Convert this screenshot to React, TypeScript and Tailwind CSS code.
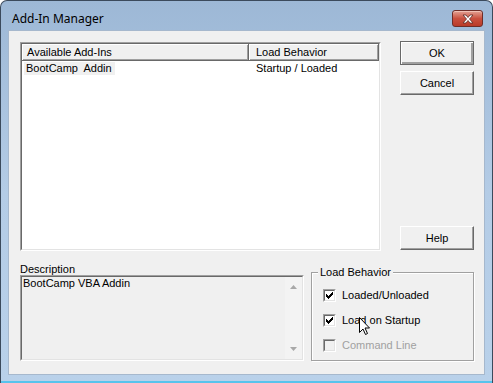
const sunken =
  'border border-t-[#a0a0a0] border-l-[#a0a0a0] border-r-white border-b-white';
const sunkenInner =
  'border border-t-[#696969] border-l-[#696969] border-r-[#e3e3e3] border-b-[#e3e3e3]';

const checkPixels = [
  [6, 0, 1], [5, 1, 2], [0, 2, 1], [4, 2, 3], [0, 3, 2], [3, 3, 3], [0, 4, 5], [1, 5, 3], [2, 6, 1],
];

function Button({ label, isDefault = false, className = '' }: { label: string; isDefault?: boolean; className?: string }) {
  return (
    <div
      className={`${className} w-[74px] flex items-center justify-center bg-[#f0f0f0] ${
        isDefault
          ? 'border border-[#696969] shadow-[inset_1px_1px_#fff,inset_-1px_-1px_#a0a0a0,inset_-2px_-2px_#a0a0a0]'
          : 'border border-t-white border-l-white border-r-[#696969] border-b-[#696969] shadow-[inset_-1px_-1px_#a0a0a0]'
      }`}
    >
      {label}
    </div>
  );
}

function Check({ label, checked, disabled = false }: { label: string; checked: boolean; disabled?: boolean }) {
  return (
    <div className={`flex items-center h-[13px] ${disabled ? 'text-[#a0a0a0]' : 'text-black'}`}>
      <div
        className={`w-[13px] h-[13px] border border-t-[#a0a0a0] border-l-[#a0a0a0] border-r-white border-b-white ${
          disabled ? 'bg-[#f0f0f0]' : 'bg-white'
        }`}
      >
        <div className="w-full h-full border border-t-[#696969] border-l-[#696969] border-r-[#e3e3e3] border-b-[#e3e3e3] flex items-center justify-center">
          {checked && (
            <svg width="7" height="7" viewBox="0 0 7 7" shapeRendering="crispEdges">
              {checkPixels.map(([x, y, w]) => (
                <rect key={`${x}-${y}`} x={x} y={y} width={w} height={1} fill="#000" />
              ))}
            </svg>
          )}
        </div>
      </div>
      <span className="ml-[6px]">{label}</span>
    </div>
  );
}

export default function App() {
  return (
    <div className="w-[493px] h-[383px] relative overflow-hidden bg-white">
      <div
        className="w-[493px] h-[383px] flex flex-col rounded-t-[7px] border border-[#3b4a5c] border-b-0 bg-gradient-to-b from-[#9db8d6] via-[#b4cce6] to-[#b9d1ea]"
        style={{ fontFamily: '"Liberation Sans", Arial, sans-serif' }}
      >
        {/* Title bar */}
        <div className="h-[29px] flex items-start justify-between pl-[11px] pr-[9px] shrink-0">
          <span className="text-[12px] leading-[16px] mt-[10px] text-black" style={{ fontFamily: '"Noto Sans", sans-serif' }}>
            Add-In Manager
          </span>
          <div className="w-[31px] h-[17px] mt-[9px] rounded-[3px] border border-[#6e2d28] bg-gradient-to-b from-[#e2a194] via-[#c9503f] to-[#b93a28] flex items-center justify-center shadow-[inset_0_1px_#f0c0b4]">
            <svg width="12" height="10" viewBox="0 0 12 10">
              <path
                d="M1 1 L4 1 L6 3.5 L8 1 L11 1 L7.5 5 L11 9 L8 9 L6 6.5 L4 9 L1 9 L4.5 5 Z"
                fill="#fff"
                stroke="#5a2a24"
                strokeWidth="0.8"
              />
            </svg>
          </div>
        </div>

        {/* Client area */}
        <div className="mx-[7px] h-[345px] bg-[#f0f0f0] border border-[#a6b8cd] flex flex-col pt-[11px] pl-[11px] text-[11px] leading-[13px] text-black">
          <div className="flex">
            <div className={`w-[361px] h-[209px] bg-white ${sunken}`}>
              <div className={`w-full h-full ${sunkenInner} flex flex-col`}>
                <div className="flex h-[17px] shrink-0">
                  <div className="w-[227px] bg-[#f0f0f0] border-r border-b border-[#696969] shadow-[inset_1px_1px_#fff,inset_-1px_-1px_#a0a0a0] pl-[5px] flex items-center">
                    Available Add-Ins
                  </div>
                  <div className="w-[130px] bg-[#f0f0f0] border-r border-b border-[#696969] shadow-[inset_1px_1px_#fff,inset_-1px_-1px_#a0a0a0] pl-[7px] flex items-center">
                    Load Behavior
                  </div>
                </div>
                <div className="flex h-[13px] mt-[1px]">
                  <div className="w-[227px] pl-[2px]">
                    <span className="inline-block bg-[#f0f0f0] pl-[2px] pr-[3px] whitespace-pre">BootCamp  Addin</span>
                  </div>
                  <div className="pl-[7px]">Startup / Loaded</div>
                </div>
              </div>
            </div>
            <div className="ml-[19px] w-[74px] flex flex-col h-[209px]">
              <Button label="OK" isDefault className="h-[24px] mt-[-1px]" />
              <Button label="Cancel" className="h-[24px] mt-[6px]" />
              <Button label="Help" className="h-[24px] mt-auto mb-[1px]" />
            </div>
          </div>

          <div className="flex mt-[12px]">
            <div className="flex flex-col">
              <span className="h-[12px] leading-[12px]">Description</span>
              <div className={`w-[284px] h-[86px] ${sunken}`}>
                <div className={`w-full h-full ${sunkenInner} flex`}>
                  <div className="flex-1 pl-[1px]">BootCamp VBA Addin</div>
                  <div className="w-[17px] h-full bg-[#f3f3f3] flex flex-col items-center justify-between py-[8px]">
                    <svg width="7" height="4" viewBox="0 0 7 4">
                      <path d="M0 4 L3.5 0 L7 4 Z" fill="#a8a8a8" />
                    </svg>
                    <svg width="7" height="4" viewBox="0 0 7 4">
                      <path d="M0 0 L3.5 4 L7 0 Z" fill="#a8a8a8" />
                    </svg>
                  </div>
                </div>
              </div>
            </div>

            <div className="ml-[7px] mt-[9px] w-[163px] h-[89px] border border-[#a0a0a0] shadow-[1px_1px_#fff,inset_1px_1px_#fff] relative flex flex-col gap-[12px] pt-[16px] pl-[11px]">
              <span className="absolute left-[6px] top-[-7px] bg-[#f0f0f0] px-[2px]">Load Behavior</span>
              <Check label="Loaded/Unloaded" checked />
              <Check label="Load on Startup" checked />
              <Check label="Command Line" checked={false} disabled />
            </div>
          </div>
        </div>

        {/* bottom frame */}
        <div className="flex-1 border-b-2 border-[#58c3ec]" />
      </div>

      {/* Mouse pointer */}
      <svg className="absolute left-[359px] top-[317px]" width="12" height="19" viewBox="0 0 12 19">
        <path
          d="M0.5 0.5 L0.5 15.5 L4 12 L6.5 17.5 L8.5 16.5 L6 11 L10.5 11 Z"
          fill="#fff"
          stroke="#000"
          strokeWidth="1"
        />
      </svg>
    </div>
  );
}
